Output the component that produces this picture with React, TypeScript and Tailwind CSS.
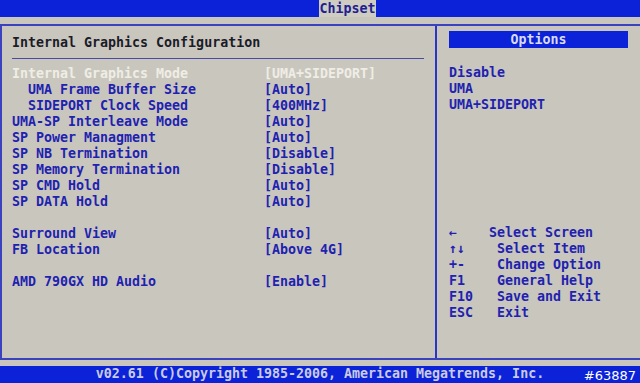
const mono = "font-['DejaVu_Sans_Mono','Liberation_Mono',monospace]"

const rows: { label: string; value: string; indent?: boolean; active?: boolean }[] = [
  { label: "Internal Graphics Mode", value: "[UMA+SIDEPORT]", active: true },
  { label: "UMA Frame Buffer Size", value: "[Auto]", indent: true },
  { label: "SIDEPORT Clock Speed", value: "[400MHz]", indent: true },
  { label: "UMA-SP Interleave Mode", value: "[Auto]" },
  { label: "SP Power Managment", value: "[Auto]" },
  { label: "SP NB Termination", value: "[Disable]" },
  { label: "SP Memory Termination", value: "[Disable]" },
  { label: "SP CMD Hold", value: "[Auto]" },
  { label: "SP DATA Hold", value: "[Auto]" },
  { label: "", value: "" },
  { label: "Surround View", value: "[Auto]" },
  { label: "FB Location", value: "[Above 4G]" },
  { label: "", value: "" },
  { label: "AMD 790GX HD Audio", value: "[Enable]" },
]

const help = [
  "←    Select Screen",
  "↑↓    Select Item",
  "+-    Change Option",
  "F1    General Help",
  "F10   Save and Exit",
  "ESC   Exit",
]

export default function App() {
  return (
    <div
      className={`relative w-[640px] h-[383px] overflow-hidden bg-[#c9c7bd] flex flex-col ${mono} text-[13.3px] leading-[16px] font-bold text-[#1f22b0]`}
    >
      {/* top menu bar */}
      <div className="h-[17px] bg-[#0b22d8] flex shrink-0">
        <div className="ml-[319px] w-[57px] bg-[#cfccc2] text-[#1e2090] text-center leading-[17px]">
          Chipset
        </div>
      </div>

      {/* main frame */}
      <div className="mt-[7px] h-[336px] flex border-t-2 border-b-2 border-l-2 border-[#3a42c0] shrink-0">
        {/* left panel */}
        <div className="w-[435px] border-r-2 border-[#2c34c8] pl-[10px] pr-[10px] pt-[9px]">
          <div className="text-[#1b1b2a] h-[16px]">Internal Graphics Configuration</div>
          <div className="mt-[7px] h-px bg-[#4a4aa0] w-[412px]" />
          <div className="mt-[7px]">
            {rows.map((r, i) => (
              <div
                key={i}
                className={`flex h-[16px] whitespace-pre ${r.active ? "text-[#efede6]" : ""}`}
              >
                <div className={`w-[252px] ${r.indent ? "pl-[16px]" : ""}`}>{r.label}</div>
                <div>{r.value}</div>
              </div>
            ))}
          </div>
        </div>

        {/* right panel */}
        <div className="flex-1 pl-[12px] pt-[5px] flex flex-col">
          <div className="w-[179px] h-[17px] bg-[#0b22d8] text-[#d8daf2] text-center leading-[17px]">
            Options
          </div>
          <div className="mt-[17px]">
            <div>Disable</div>
            <div>UMA</div>
            <div>UMA+SIDEPORT</div>
          </div>
          <div className="mt-[112px] whitespace-pre">
            {help.map((h) => (
              <div key={h}>{h}</div>
            ))}
          </div>
        </div>
      </div>

      {/* bottom bar */}
      <div className="mt-[6px] flex-1 bg-[#0b22d8] text-[#c9cbe6] text-center leading-[15px]">
        v02.61 (C)Copyright 1985-2006, American Megatrends, Inc.
      </div>
      <div className="absolute right-[4px] bottom-0 text-white font-normal text-[13px] leading-[15px] font-['DejaVu_Sans',sans-serif]">
        #63887
      </div>
    </div>
  )
}
